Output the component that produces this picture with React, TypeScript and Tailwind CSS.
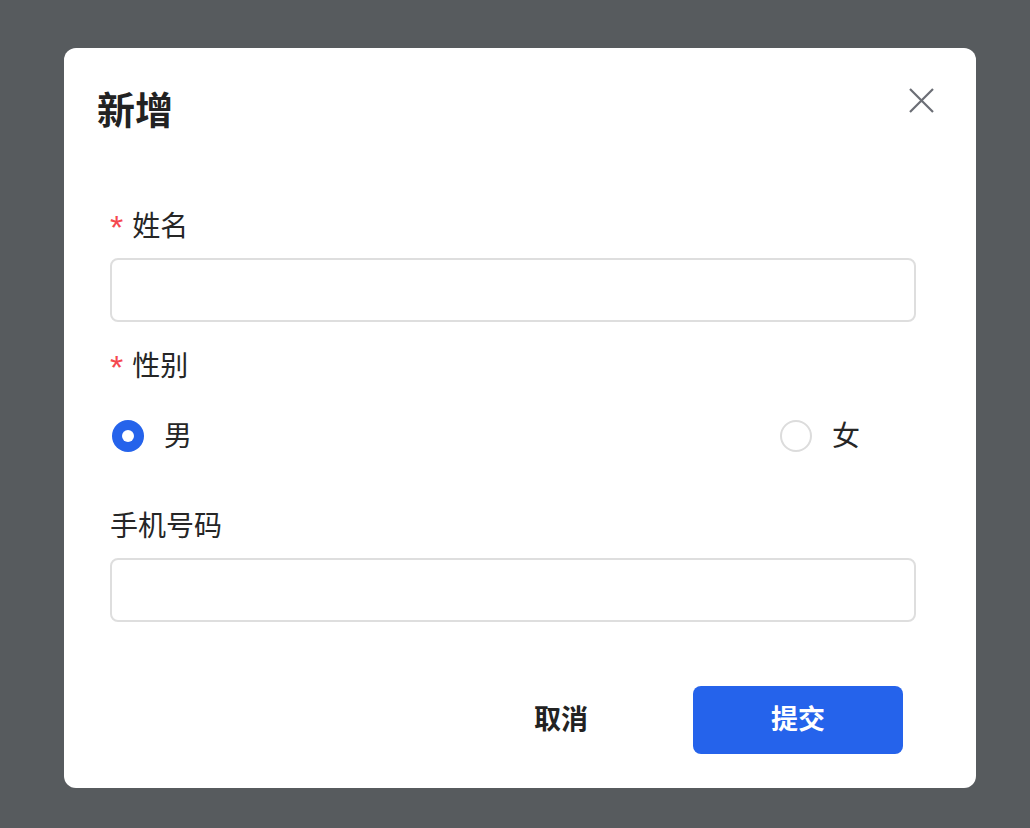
import { useState } from "react";

const FONT = { fontFamily: '"Noto Sans CJK SC", "Noto Sans", sans-serif' };

const Label = ({ label, required }: { label: string; required?: boolean }) => (
  <label className="flex items-center h-[40px] pb-[4px] text-[28px] text-[#262626] leading-none">
    {required && (
      <span className="font-['Liberation_Sans',sans-serif] text-[#f5484f] text-[34px] mr-[9px] mt-[5px]">
        *
      </span>
    )}
    {label}
  </label>
);

const Field = ({ label, required }: { label: string; required?: boolean }) => (
  <>
    <Label label={label} required={required} />
    <input
      type="text"
      className="mt-[12px] block w-full h-[64px] rounded-[8px] border-2 border-[#dedede] bg-white px-4 text-[26px] outline-none"
    />
  </>
);

const Radio = ({
  label,
  checked,
  onClick,
}: {
  label: string;
  checked: boolean;
  onClick: () => void;
}) => (
  <button type="button" onClick={onClick} className="flex items-center gap-[20px]">
    {checked ? (
      <span className="w-[32px] h-[32px] rounded-full bg-[#2563eb] flex items-center justify-center">
        <span className="w-[12px] h-[12px] rounded-full bg-white" />
      </span>
    ) : (
      <span className="w-[32px] h-[32px] rounded-full border-2 border-[#dcdcdc] bg-white" />
    )}
    <span className="text-[28px] text-[#262626] leading-none pb-[4px]">{label}</span>
  </button>
);

export default function App() {
  const [gender, setGender] = useState<"m" | "f">("m");

  return (
    <div className="w-[1030px] h-[828px] bg-[#575b5e] pt-[48px] pl-[64px]" style={FONT}>
      <div className="w-[912px] h-[740px] bg-white rounded-[12px] pt-[42px] pl-[46px] pr-[60px]">
        <div className="flex items-center justify-between h-[40px]">
          <h2 className="text-[38px] font-bold text-[#222] leading-none -ml-[13px] pb-[4px]">新增</h2>
          <button type="button" className="-mr-[18px] mb-[20px] text-[#6b6e75]">
            <svg width="26" height="26" viewBox="0 0 26 26" fill="none" stroke="currentColor" strokeWidth="2.2">
              <path d="M2 2L25 25M25 2L2 25" />
            </svg>
          </button>
        </div>

        <div className="mt-[76px]">
          <Field label="姓名" required />
        </div>

        <div className="mt-[24px]">
          <Label label="性别" required />
          <div className="mt-[22px] h-[56px] flex items-center justify-between pl-[2px] pr-[56px]">
            <Radio label="男" checked={gender === "m"} onClick={() => setGender("m")} />
            <Radio label="女" checked={gender === "f"} onClick={() => setGender("f")} />
          </div>
        </div>

        <div className="mt-[42px]">
          <Field label="手机号码" />
        </div>

        <div className="mt-[64px] flex justify-end gap-[27px] pr-[13px]">
          <button type="button" className="w-[210px] h-[68px] pb-[4px] text-[27px] font-semibold text-[#222]">
            取消
          </button>
          <button
            type="button"
            className="w-[210px] h-[68px] pb-[4px] rounded-[8px] bg-[#2563eb] text-[27px] font-semibold text-white"
          >
            提交
          </button>
        </div>
      </div>
    </div>
  );
}
